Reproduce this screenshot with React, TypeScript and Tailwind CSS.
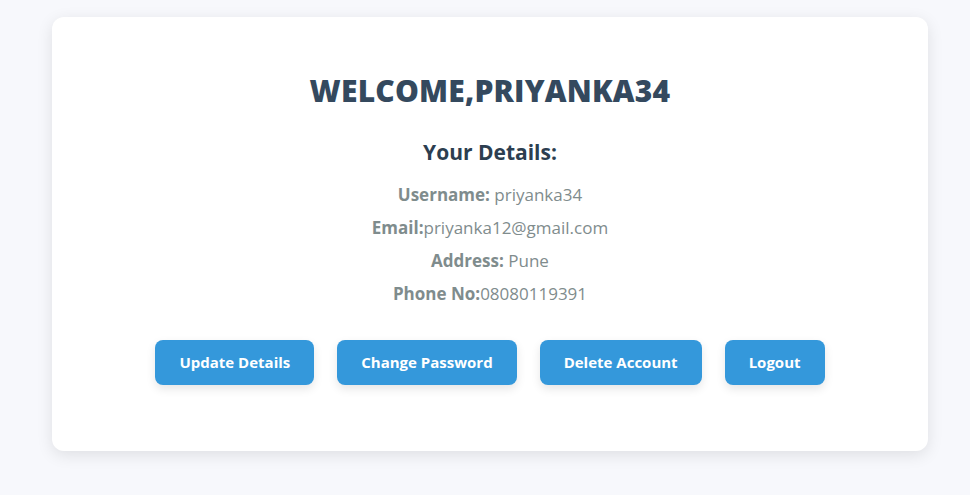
const details = [
  { label: "Username:", value: " priyanka34" },
  { label: "Email:", value: "priyanka12@gmail.com" },
  { label: "Address:", value: " Pune" },
  { label: "Phone No:", value: "08080119391" },
];

const actions = ["Update Details", "Change Password", "Delete Account", "Logout"];

export default function App() {
  return (
    <div className="min-h-screen bg-[#f7f8fc] pt-[17px] px-[52px]" style={{ fontFamily: "'Open Sans', 'Noto Sans', sans-serif" }}>
      <div className="w-[876px] bg-white rounded-[12px] shadow-[0_4px_16px_rgba(0,0,0,0.1)] pt-[53px] pb-[66px] flex flex-col items-center">
        {/* Header */}
        <h1 className="text-[30px] leading-[42px] font-extrabold text-[#34495e] tracking-[0.2px]">WELCOME,PRIYANKA34</h1>
        <h2 className="mt-[25px] text-[21px] leading-[30px] font-bold text-[#2c3e50]">Your Details:</h2>

        {/* Details */}
        <div className="mt-[16px] flex flex-col items-center gap-[9px]">
          {details.map((d) => (
            <p key={d.label} className="text-[17px] leading-[24px] text-[#7f8c8d] whitespace-pre">
              <span className="font-bold">{d.label}</span>
              {d.value}
            </p>
          ))}
        </div>

        {/* Actions */}
        <div className="mt-[34px] flex gap-[23px]">
          {actions.map((a) => (
            <button
              key={a}
              className="h-[45px] px-[24px] rounded-[8px] bg-[#3498db] text-white text-[15px] font-bold shadow-[0_4px_10px_rgba(0,0,0,0.1)]"
            >
              {a}
            </button>
          ))}
        </div>
      </div>
    </div>
  );
}
